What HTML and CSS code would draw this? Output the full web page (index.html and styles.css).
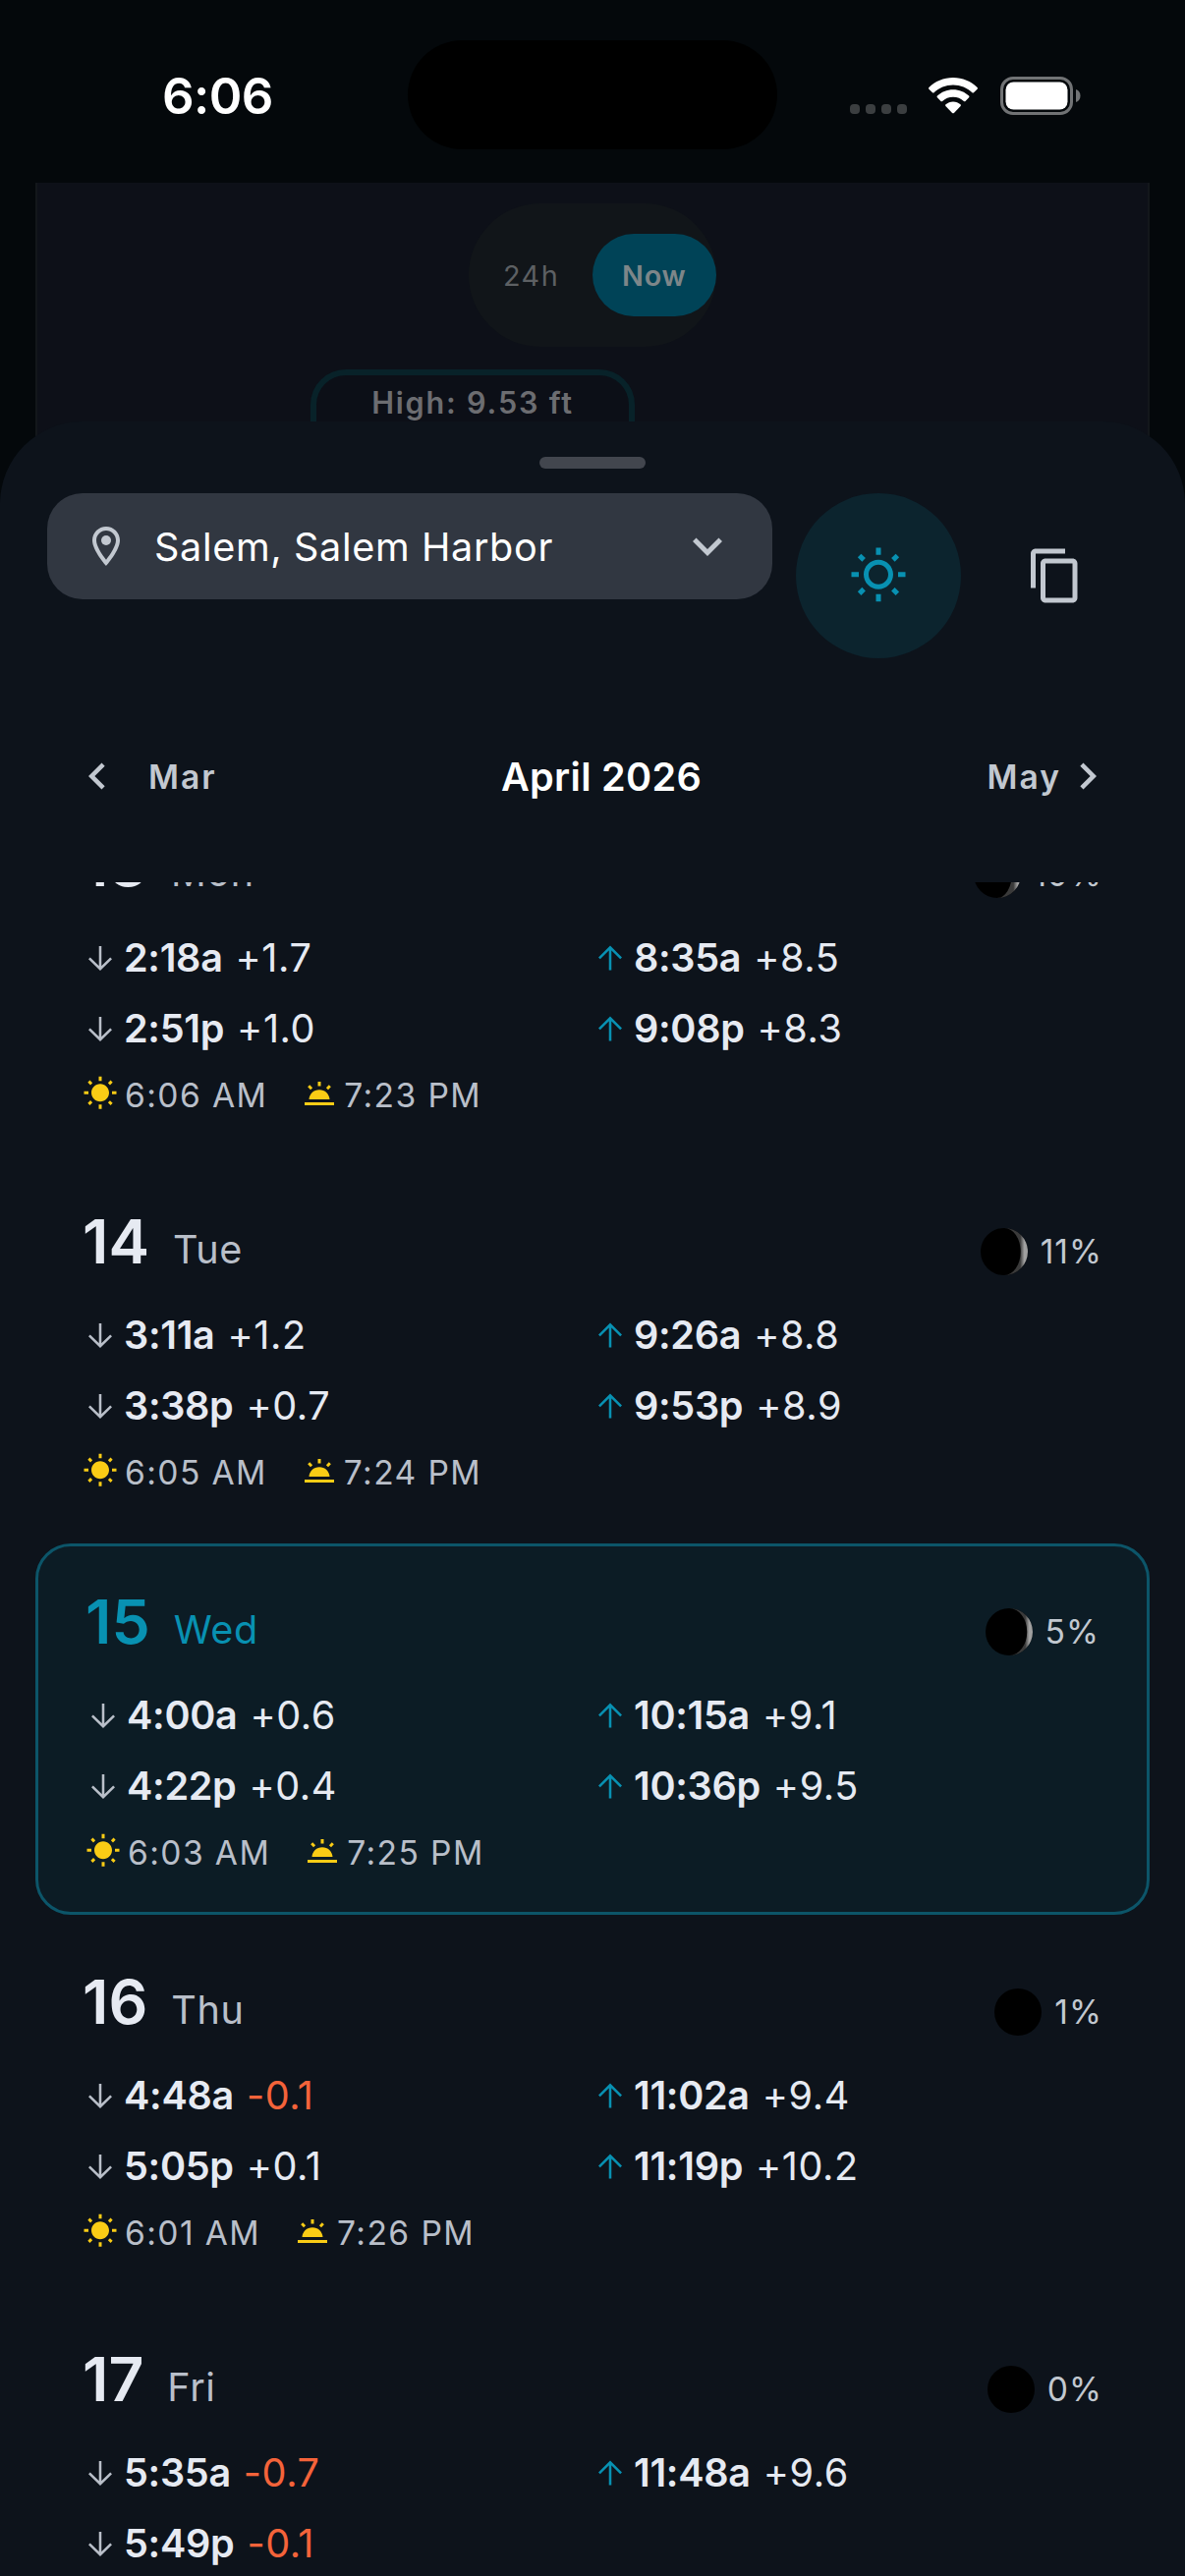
FILE: index.html
```html
<!DOCTYPE html>
<html lang="en">
<head>
  <meta charset="UTF-8" />
  <meta name="viewport" content="width=device-width, initial-scale=1.0"/>
  <title>Tide Calendar</title>
  <link rel="stylesheet" href="styles.css">
</head>
<body>
  <svg class="sprite" xmlns="http://www.w3.org/2000/svg">
    <defs>
      <linearGradient id="lit"><stop offset=".68" stop-color="#3a3a3a"/><stop offset=".85" stop-color="#a0a0a0"/></linearGradient>
    </defs>
    <symbol id="down" viewBox="0 0 24 24"><path d="M12 4v15M4.6 12.2l7.4 7.3 7.4-7.3" fill="none" stroke="currentColor" stroke-width="1.7"/></symbol>
    <symbol id="up" viewBox="0 0 24 24"><path d="M12 20.4V5M4.6 12.2L12 4.9l7.4 7.3" fill="none" stroke="currentColor" stroke-width="1.7"/></symbol>
    <symbol id="sun" viewBox="0 0 24 24"><path fill="currentColor" d="M6.76 4.84l-1.8-1.79-1.41 1.41 1.79 1.79 1.42-1.41zM4 10.5H1v2h3v-2zm9-9.95h-2V3.5h2V.55zm7.45 3.91l-1.41-1.41-1.79 1.79 1.41 1.41 1.79-1.79zm-3.21 13.7l1.79 1.8 1.41-1.41-1.8-1.79-1.4 1.4zM20 10.5v2h3v-2h-3zm-8-5c-3.31 0-6 2.69-6 6s2.69 6 6 6 6-2.69 6-6-2.69-6-6-6zm-1 16.95h2V19.5h-2v2.95zm-7.45-3.91l1.41 1.41 1.79-1.8-1.41-1.41-1.79 1.8z"/></symbol>
    <symbol id="sunset" viewBox="0 0 24 24"><path fill="currentColor" d="M2 18h20v2H2zM11 4h2v3h-2zM4.100 7.500l1.400-1.400 1.900 2-1.400 1.400zM19.900 7.500l-1.400-1.400-1.900 2 1.400 1.400zM5 16c.2-3.700 3.200-6.500 7-6.500s6.800 2.800 7 6.500z"/></symbol>
  </svg>

  <div class="backdrop">
    <div class="status-bar">
      <div class="time">6:06</div>
      <div class="island"></div>
      <div class="status-icons">
        <div class="signal"><i></i><i></i><i></i><i></i></div>
        <svg class="wifi" viewBox="0 0 50 37" fill="#fff">
          <path d="M25 0c9.600 0 18.300 3.700 24.600 10 .5.500.5 1.200 0 1.700l-3.600 3.600c-.4.400-1.100.4-1.600 0C39.400 10.400 32.500 7.500 25 7.500S10.600 10.400 5.600 15.300c-.5.400-1.200.4-1.600 0L.4 11.700c-.5-.5-.5-1.200 0-1.700C6.700 3.700 15.400 0 25 0z"/>
          <path d="M25 12.300c6.200 0 11.900 2.400 16.100 6.300.5.500.5 1.200 0 1.700l-3.600 3.600c-.4.400-1.100.4-1.600 0-2.900-2.600-6.700-4.200-10.900-4.200s-8 1.600-10.900 4.200c-.5.400-1.200.4-1.600 0l-3.600-3.600c-.5-.5-.5-1.200 0-1.700 4.200-3.900 9.900-6.300 16.100-6.300z"/>
          <path d="M25 24.500c2.900 0 5.500 1.100 7.500 2.800.5.500.5 1.200.1 1.700l-6.700 6.900c-.5.500-1.300.5-1.800 0L17.400 29c-.4-.5-.4-1.200.1-1.700 2-1.700 4.600-2.800 7.500-2.800z"/>
        </svg>
        <svg class="battery" viewBox="0 0 82 39">
          <rect x="1.500" y="1.500" width="71" height="36" rx="11.500" fill="none" stroke="#717375" stroke-width="3"/>
          <rect x="5.500" y="5.500" width="63" height="28" rx="8" fill="#fff"/>
          <path d="M77 13c3 1 4.500 3.500 4.500 6.500S80 25 77 26z" fill="#717375"/>
        </svg>
      </div>
    </div>
    <div class="chart-panel">
      <div class="range-toggle">
        <span class="range">24h</span>
        <span class="range active">Now</span>
      </div>
      <div class="high-label">High: 9.53 ft</div>
    </div>
  </div>

  <div class="sheet">
    <div class="handle"></div>
    <div class="toolbar">
      <div class="station">
        <svg class="icon-pin" viewBox="0 0 24 24" fill="currentColor"><path d="M12 2C8.130 2 5 5.130 5 9c0 5.250 7 13 7 13s7-7.750 7-13c0-3.870-3.130-7-7-7zM7 9c0-2.760 2.240-5 5-5s5 2.240 5 5c0 2.880-2.880 7.190-5 9.880C9.920 16.210 7 11.850 7 9z"/><circle cx="12" cy="9" r="2.500"/></svg>
        <span class="station-name">Salem, Salem Harbor</span>
        <svg class="icon" viewBox="0 0 24 24" fill="currentColor"><path d="M7.410 8.590L12 13.170l4.590-4.580L18 10l-6 6-6-6z"/></svg>
      </div>
      <div class="tool selected">
        <svg class="icon" viewBox="0 0 24 24" fill="currentColor"><path d="M6.760 4.840l-1.800-1.790-1.410 1.410 1.790 1.790 1.420-1.410zM4 10.500H1v2h3v-2zm9-9.950h-2V3.500h2V.55zm7.450 3.910l-1.410-1.410-1.790 1.790 1.410 1.410 1.790-1.790zm-3.210 13.700l1.790 1.800 1.410-1.410-1.800-1.790-1.400 1.400zM20 10.500v2h3v-2h-3zm-8-5c-3.310 0-6 2.690-6 6s2.690 6 6 6 6-2.690 6-6-2.690-6-6-6zm0 10c-2.210 0-4-1.790-4-4s1.790-4 4-4 4 1.790 4 4-1.790 4-4 4zm-1 6.950h2V19.500h-2v2.950zm-7.450-3.910l1.410 1.410 1.790-1.800-1.410-1.410-1.790 1.800z"/></svg>
      </div>
      <div class="tool">
        <svg class="icon" viewBox="0 0 24 24" fill="currentColor"><path d="M16 1H4c-1.100 0-2 .9-2 2v14h2V3h12V1zm3 4H8c-1.100 0-2 .9-2 2v14c0 1.100.9 2 2 2h11c1.100 0 2-.9 2-2V7c0-1.100-.9-2-2-2zm0 16H8V7h11v14z"/></svg>
      </div>
    </div>

    <div class="month-nav">
      <div class="month prev">
        <svg viewBox="0 0 24 24" fill="currentColor"><path d="M15.410 7.410L14 6l-6 6 6 6 1.410-1.410L10.830 12z"/></svg>
        <span>Mar</span>
      </div>
      <div class="month-title">April 2026</div>
      <div class="month next">
        <span>May</span>
        <svg viewBox="0 0 24 24" fill="currentColor"><path d="M10 6L8.590 7.410 13.170 12l-4.580 4.590L10 18l6-6z"/></svg>
      </div>
    </div>

    <div class="days" id="days"></div>
  </div>

  <script>
    const days = [
      { date: 13, name: 'Mon', moon: 19, low: [['2:18a', '+1.7'], ['2:51p', '+1.0']], high: [['8:35a', '+8.5'], ['9:08p', '+8.3']], rise: '6:06 AM', set: '7:23 PM' },
      { date: 14, name: 'Tue', moon: 11, low: [['3:11a', '+1.2'], ['3:38p', '+0.7']], high: [['9:26a', '+8.8'], ['9:53p', '+8.9']], rise: '6:05 AM', set: '7:24 PM' },
      { date: 15, name: 'Wed', moon: 5, today: true, low: [['4:00a', '+0.6'], ['4:22p', '+0.4']], high: [['10:15a', '+9.1'], ['10:36p', '+9.5']], rise: '6:03 AM', set: '7:25 PM' },
      { date: 16, name: 'Thu', moon: 1, low: [['4:48a', '-0.1'], ['5:05p', '+0.1']], high: [['11:02a', '+9.4'], ['11:19p', '+10.2']], rise: '6:01 AM', set: '7:26 PM' },
      { date: 17, name: 'Fri', moon: 0, low: [['5:35a', '-0.7'], ['5:49p', '-0.1']], high: [['11:48a', '+9.6']] }
    ];

    function icon(id) {
      return `<svg class="glyph ${id}"><use href="#${id}"/></svg>`;
    }

    function tides(list, dir) {
      return list.map(([time, height]) =>
        `<div class="tide">${icon(dir)}<b>${time}</b><span class="${height[0] === '-' ? 'negative' : ''}">${height}</span></div>`
      ).join('');
    }

    // lit crescent on the right, inner edge is half an ellipse
    function moon(percent) {
      const rx = 24 - (4.5 + percent * 0.25);
      const lit = percent > 1 ? `<path d="M24 0A24 24 0 0 1 24 48A${rx} 24 0 0 0 24 0z" fill="url(#lit)"/>` : '';
      return `<svg class="moon" viewBox="0 0 48 48"><circle cx="24" cy="24" r="24"/>${lit}</svg>`;
    }

    document.getElementById('days').innerHTML = days.map(d => `
      <div class="day${d.today ? ' today' : ''}">
        <div class="day-head">
          <span class="date">${d.date}</span>
          <span class="weekday">${d.name}</span>
          <span class="phase">${moon(d.moon)}<span>${d.moon}%</span></span>
        </div>
        <div class="tides">
          <div>${tides(d.low, 'down')}</div>
          <div>${tides(d.high, 'up')}</div>
        </div>
        ${d.rise ? `<div class="sun-times">
          <div class="sun-time">${icon('sun')}<span>${d.rise}</span></div>
          <div class="sun-time">${icon('sunset')}<span>${d.set}</span></div>
        </div>` : ''}
      </div>`).join('');
  </script>
</body>
</html>
```
FILE: styles.css
```css
* {
  margin: 0; padding: 0; box-sizing: border-box;
}

html, body {
  width: 1206px;
  height: 2622px;
  overflow: hidden;
  background: #04080b;
}

body {
  font-family: Inter, Roboto, sans-serif;
  color: #e6eaf2;
  display: flex;
  flex-direction: column;
}

svg { display: block; flex: none; }

.sprite { position: absolute; width: 0; height: 0; }

/* dimmed page behind the sheet */
.backdrop {
  height: 429px;
  flex: none;
}

.status-bar {
  height: 186px;
  padding-top: 41px;
  display: flex;
  align-items: flex-start;
}

.time {
  width: 415px;
  padding-left: 165px;
  padding-top: 26px;
  font-size: 51px;
  line-height: 62px;
  font-weight: 600;
  letter-spacing: -.6px;
  color: #fff;
}

.island {
  width: 376px;
  height: 111px;
  border-radius: 56px;
  background: #000;
}

.status-icons {
  display: flex;
  align-items: flex-end;
  height: 76px;
  padding-left: 74px;
}

.signal {
  display: flex;
  gap: 6px;
  margin-right: 22px;
  padding-bottom: 1px;
}

.signal i {
  width: 10px;
  height: 10px;
  border-radius: 4px;
  background: #3b3e40;
}

.wifi {
  width: 50px;
  height: 37px;
  margin: 0 23px 1px 0;
}

.battery { width: 82px; height: 39px; }

.chart-panel {
  height: 330px;
  margin: 0 36px;
  padding-top: 21px;
  background: #0d1018;
  border: 3px solid #13171b;
  border-width: 0 2px;
}

.range-toggle {
  width: 252px;
  height: 146px;
  margin-left: 439px;
  border-radius: 73px;
  background: #111519;
  display: flex;
  align-items: center;
}

.range {
  width: 126px;
  padding-left: 35px;
  padding-top: 1px;
  font-size: 28.800px;
  letter-spacing: 1.500px;
  color: #5d6063;
}

.range.active {
  height: 84px;
  line-height: 84px;
  padding-left: 30px;
  border-radius: 42px;
  background: #004357;
  color: #7d8689;
  font-weight: 600;
  letter-spacing: .8px;
}

.high-label {
  width: 330px;
  height: 100px;
  margin: 23px 0 0 278px;
  border: 6px solid #082229;
  border-radius: 36px;
  background: #0c0f17;
  text-align: center;
  font-size: 30.600px;
  font-weight: 600;
  line-height: 56px;
  letter-spacing: 1.800px;
  color: #6c6d71;
}

.sheet {
  position: relative;
  height: 2193px;
  border-radius: 84px 84px 0 0;
  background: #0d131b;
  display: flex;
  flex-direction: column;
}

.handle {
  width: 108px;
  height: 12px;
  margin: 36px auto 25px;
  border-radius: 6px;
  background: #42464e;
  flex: none;
}

.toolbar {
  display: flex;
  align-items: flex-start;
  padding: 0 48px;
  color: #c2c8d0;
}

.station {
  width: 738px;
  height: 108px;
  margin-right: 24px;
  padding: 0 36px;
  border-radius: 36px;
  background: #313741;
  display: flex;
  align-items: center;
}

.icon { width: 60px; height: 60px; }
.icon-pin { width: 48px; height: 48px; }

.station-name {
  flex: 1;
  margin-left: 25px;
  padding-top: 2px;
  font-size: 39.600px;
  letter-spacing: .65px;
  color: #fff;
}

.tool {
  width: 168px;
  height: 168px;
  border-radius: 50%;
  display: flex;
  align-items: center;
  justify-content: center;
}

.tool + .tool { margin-left: 12px; }

.tool.selected {
  background: #0c242e;
  color: #0891b2;
}

.month-nav {
  height: 228px;
  padding: 12px 72px 0;
  display: flex;
  align-items: center;
  justify-content: space-between;
  color: #c2c8d0;
}

.month {
  width: 200px;
  display: flex;
  align-items: center;
  font-size: 33.600px;
  font-weight: 600;
  letter-spacing: 2px;
}

.month svg { width: 54px; height: 54px; }
.prev { gap: 25px; }
.next { justify-content: flex-end; }

.month-title {
  margin-left: 18px;
  padding-top: 1px;
  font-size: 39.600px;
  font-weight: 600;
  letter-spacing: .3px;
  color: #fff;
}

.days {
  flex: 1;
  min-height: 0;
  overflow: hidden;
  padding: 0 36px;
  display: flex;
  flex-direction: column;
  gap: 12px;
}

.day {
  height: 372px;
  flex: none;
  padding: 35px 48px;
}

/* the list is scrolled so the first row sits under the month bar */
.day:first-child { margin-top: -95px; }

.day.today {
  height: 378px;
  border: 3px solid #0c5569;
  border-radius: 36px;
  background: #0c1c25;
}

.day-head {
  height: 101px;
  display: flex;
  align-items: baseline;
}

.date {
  font-size: 62.400px;
  font-weight: 600;
  line-height: 84px;
}

.weekday {
  margin: 1px 0 0 24px;
  font-size: 39.600px;
  letter-spacing: .6px;
  color: #b9bfc9;
}

.today .date, .today .weekday { color: #0891b2; }

.phase {
  margin: 1px 0 0 auto;
  display: flex;
  align-items: baseline;
  gap: 13px;
  font-size: 33.600px;
  letter-spacing: 1px;
  color: #c2c8d0;
}

.moon {
  width: 48px;
  height: 48px;
  align-self: center;
  margin-top: -3px;
}

.tides {
  display: grid;
  grid-template-columns: 1fr 1fr;
}

.tide {
  height: 72px;
  display: flex;
  align-items: center;
  font-size: 39.600px;
}

.glyph {
  width: 36px;
  height: 36px;
  margin-right: 6px;
  color: #b9bfc9;
}

.tide b {
  font-weight: 600;
  letter-spacing: -.3px;
  margin-right: 13px;
}

.tide span { letter-spacing: .6px; }
.glyph.up { color: #0891b2; }
.glyph.sun, .glyph.sunset { color: #facc15; }
.negative { color: #f4633a; }

.sun-times {
  height: 62px;
  display: flex;
  align-items: center;
  gap: 35px;
  font-size: 33.600px;
  letter-spacing: 1.400px;
  color: #b9bfc9;
}

.sun-time { display: flex; align-items: center; }
.sun-time span { padding: 1px 0 0 1px; }
.sun-time .glyph { margin-bottom: 2px; }
```
